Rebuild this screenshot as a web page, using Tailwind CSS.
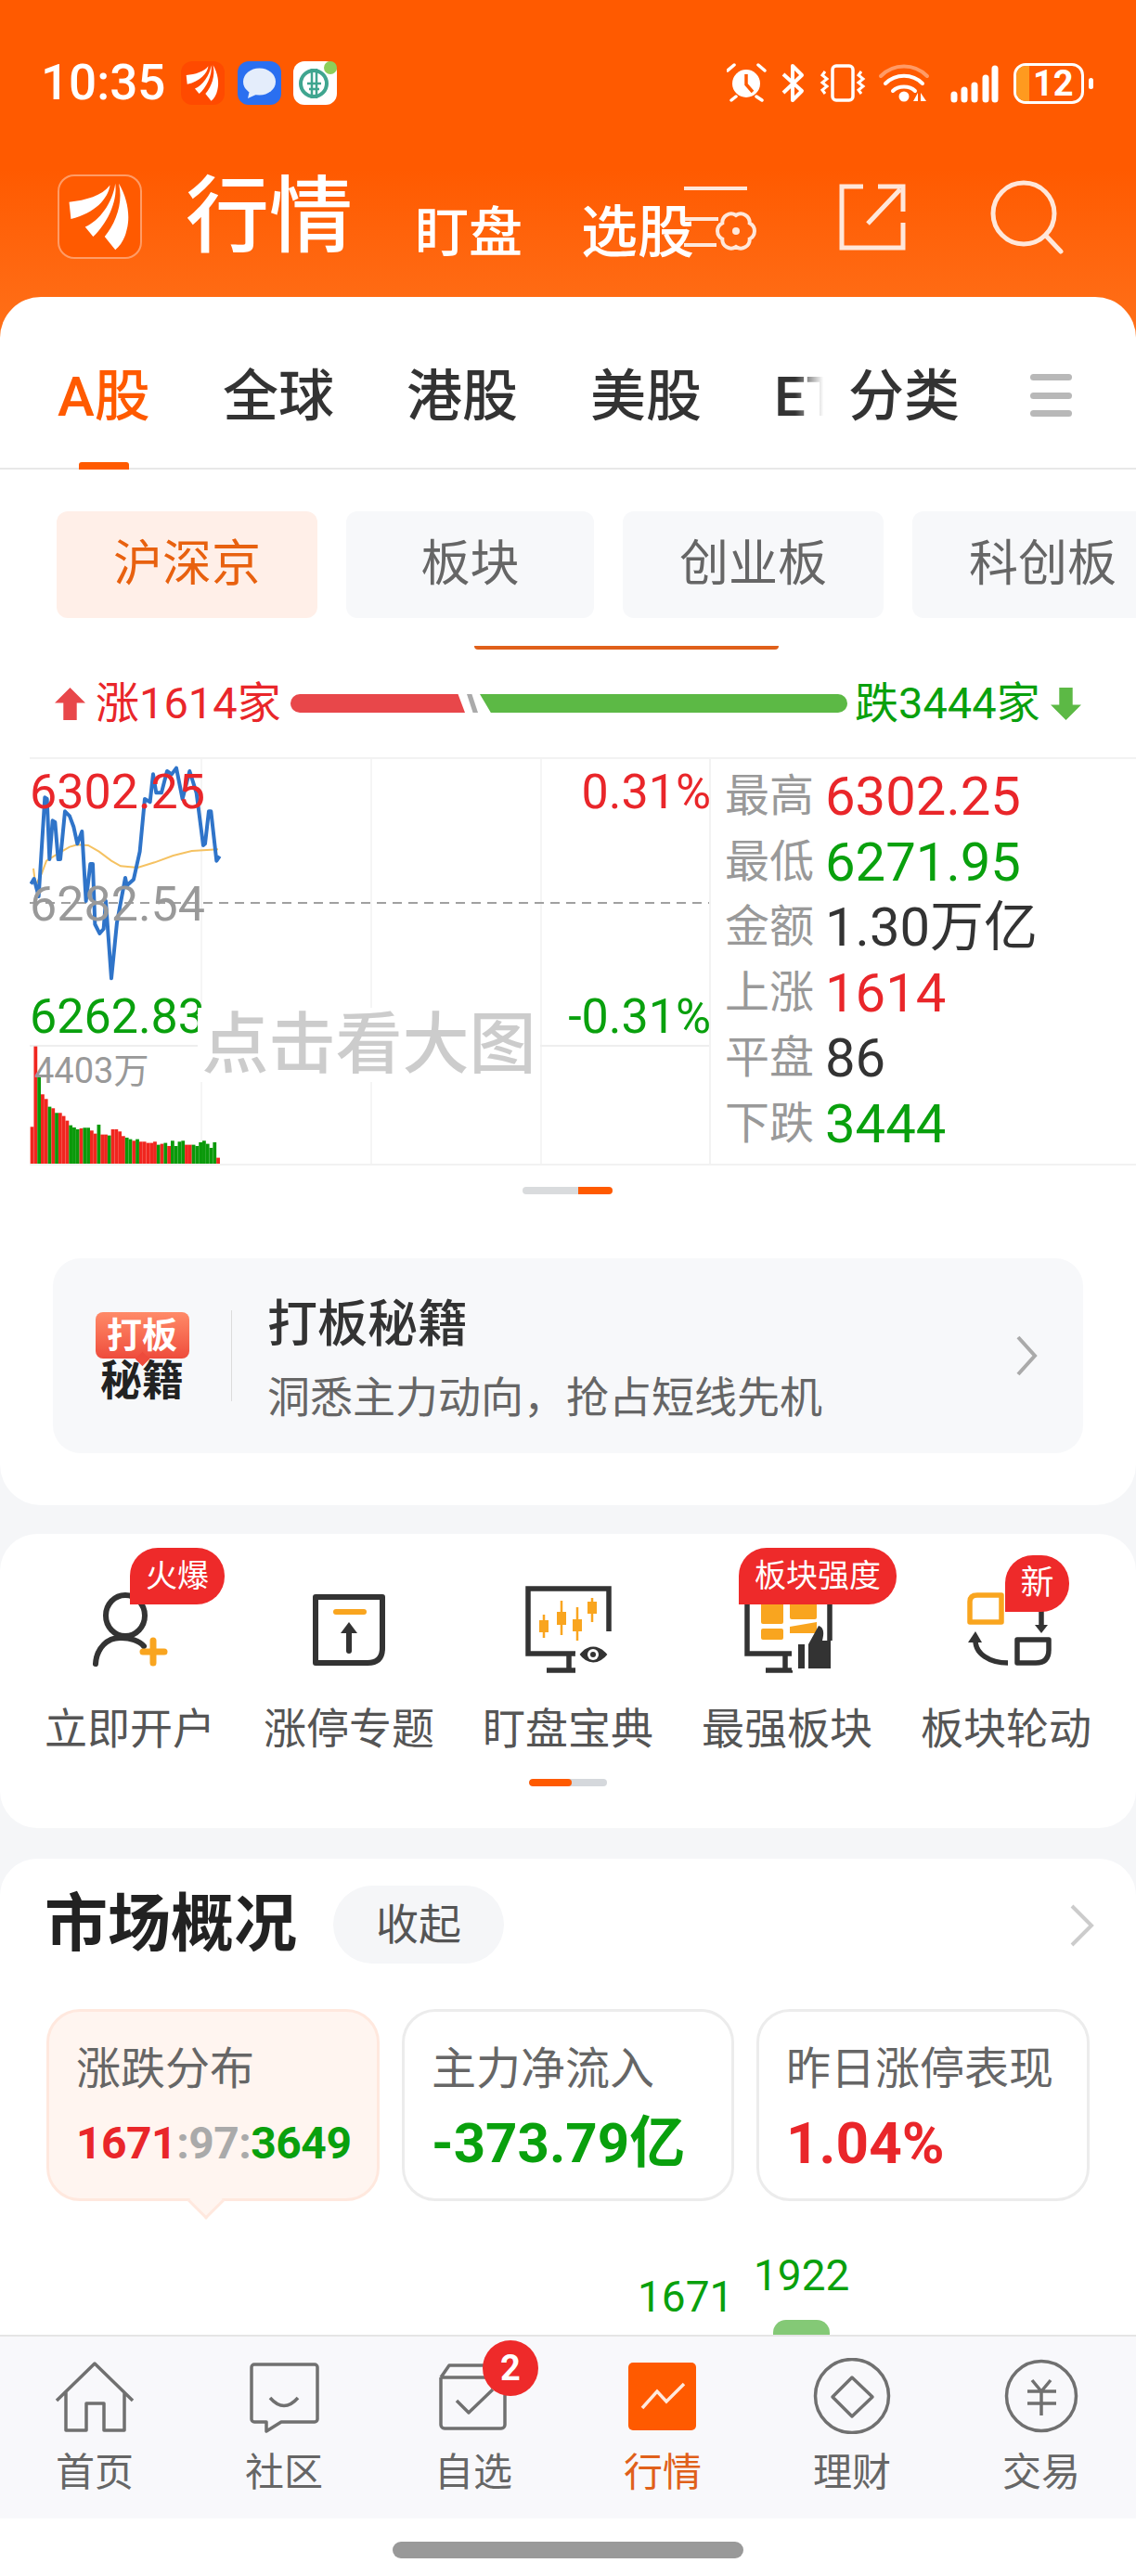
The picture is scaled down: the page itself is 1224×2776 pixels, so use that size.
<!DOCTYPE html>
<html lang="zh">
<head>
    <meta charset="utf-8"/>
    <meta content="width=device-width, initial-scale=1.0" name="viewport"/>
    <title>行情</title>
    <script src="https://cdn.jsdelivr.net/npm/@tailwindcss/browser@4"></script>
</head>
<body class="bg-[#f5f6f8] font-['Roboto','Noto_Sans_CJK_SC',sans-serif] antialiased">
<div class="w-[1224px] h-[2776px] overflow-hidden flex flex-col whitespace-nowrap">
    <!-- Orange header -->
    <header class="h-[364px] flex-none bg-gradient-to-b from-[#ff5a00] from-50% to-[#ff7018] text-white">
        <!-- Status bar -->
        <div class="h-[47px] mt-[66px] flex items-center pl-[44px] pr-[46px]">
            <span class="text-[53px] font-medium leading-none w-[151px]">10:35</span>
            <div class="w-[47px] h-[47px] rounded-[12px] bg-[#ff4a00] flex items-center justify-center">
                <svg viewBox="0 0 91 91" class="w-[47px] h-[47px]"><g fill="#fff"><path d="M11 29C30 27 48 22 57 10C55 25 40 42 13 48Z"/><path d="M63 8C66 30 52 55 38 68L29 57C45 50 60 30 63 8Z"/><path d="M67 8C77 25 80 45 76 60C74 70 69 78 63 83L51 68C64 52 72 30 67 8Z"/></g></svg>
            </div>
            <div class="w-[47px] h-[47px] ml-[14px] rounded-[12px] bg-[#2a6ff0] flex items-center justify-center">
                <svg viewBox="0 0 47 47" class="w-[47px] h-[47px]"><ellipse cx="23.5" cy="22" rx="17.5" ry="14.5" fill="#e4edfb"/><path d="M13 31L11 40L22 35Z" fill="#e4edfb"/></svg>
            </div>
            <div class="w-[47px] h-[47px] ml-[13px] rounded-[12px] bg-white relative">
                <svg viewBox="0 0 47 47" class="w-[47px] h-[47px]"><circle cx="22" cy="24" r="14" fill="none" stroke="#3fa58f" stroke-width="4"/><path d="M20 8V40M25 8V40M15 24H30M17 30H28" stroke="#3fa58f" stroke-width="2.5" fill="none"/><circle cx="40" cy="7" r="7" fill="#8ccf5a"/></svg>
            </div>
            <div class="flex-1"></div>
            <svg viewBox="0 0 293 46" class="w-[293px] h-[46px] mr-[16px]" fill="none" stroke="#fff">
                <circle cx="21" cy="23" r="15" fill="#fff" stroke="none"/>
                <path d="M21 13V24L28 32" stroke="#ff5a00" stroke-width="3.5"/>
                <path d="M1 9L8 3M34 3L41 9M5 41L10 37M32 37L38 41" stroke-width="3.5" stroke-linecap="round"/>
                <path d="M61 13L81 31L71 41V4L81 14L61 33" stroke-width="4" stroke-linejoin="round"/>
                <rect x="114" y="4" width="22" height="37" rx="4" stroke-width="3.5"/>
                <path d="M106 10l-3 4l5 4l-5 4l5 4l-5 4l3 4M145 10l-3 4l5 4l-5 4l5 4l-5 4l3 4" stroke-width="3"/>
                <path d="M166 15C180 1 202 1 216 15" stroke="#ff9b66" stroke-width="4" stroke-linecap="round"/>
                <path d="M171 23C182 12 200 12 211 23M179 31C185 25 197 25 203 31" stroke-width="4" stroke-linecap="round"/>
                <circle cx="191" cy="37" r="5.5" fill="#fff" stroke="none"/>
                <path d="M206 33V42L201 42ZM209 33V42L215 42Z" fill="#fff" stroke="none"/>
                <g stroke-width="7" stroke-linecap="round"><path d="M245 35V40M256 30V40M267 25V40M279 17V40M289 7V40"/></g>
            </svg>
            <div class="w-[76px] h-[44px] rounded-[13px] border-[3px] border-white overflow-hidden flex items-center">
                <div class="w-[14px] h-full bg-[#ff9a1f]"></div>
                <span class="ml-[4px] text-[38px] font-bold leading-[38px]">12</span>
            </div>
            <div class="w-[5px] h-[12px] ml-[5px] rounded-full bg-white"></div>
        </div>
        <!-- Title row -->
        <div class="mt-[75px] h-[91px] flex items-center pl-[62px]">
            <div class="w-[91px] h-[91px] rounded-[18px] border-2 border-white/40 bg-[#ff5a00] flex-none">
                <svg viewBox="0 0 91 91" class="w-[87px] h-[87px]"><g fill="#fff"><path d="M11 29C30 27 48 22 57 10C55 25 40 42 13 48Z"/><path d="M63 8C66 30 52 55 38 68L29 57C45 50 60 30 63 8Z"/><path d="M67 8C77 25 80 45 76 60C74 70 69 78 63 83L51 68C64 52 72 30 67 8Z"/></g></svg>
            </div>
            <span class="ml-[47px] text-[90px] leading-[91px] font-medium flex-none">行情</span>
            <span class="ml-[67px] mt-[34px] text-[58px] leading-[60px] font-medium flex-none">盯盘</span>
            <span class="ml-[63px] mt-[34px] w-[122px] text-[61px] leading-[60px] font-medium flex-none">选股</span>
            <svg viewBox="0 0 80 80" class="w-[80px] h-[80px] ml-[-12px] flex-none opacity-85" fill="none" stroke="#fff" stroke-width="4">
                <path d="M1 9H69M1 42H38M1 70H36"/>
                <path d="M57 38A9.5 9.5 0 0 1 71.7 46.500A9.5 9.5 0 0 1 71.7 63.500A9.5 9.5 0 0 1 57 72A9.500 9.500 0 0 1 42.300 63.500A9.500 9.500 0 0 1 42.300 46.500A9.500 9.500 0 0 1 57 38Z"/>
                <circle cx="57" cy="55" r="4" fill="#fff" stroke="none"/>
            </svg>
            <svg viewBox="0 0 72 72" class="w-[72px] h-[72px] ml-[88px] flex-none opacity-85" fill="none" stroke="#fff" stroke-width="5">
                <path d="M26 3H3V69H69V42M42 3H69V30M66 6L31 43"/>
            </svg>
            <svg viewBox="0 0 80 80" class="w-[80px] h-[80px] ml-[91px] flex-none opacity-85" fill="none" stroke="#fff" stroke-width="5">
                <circle cx="36" cy="36" r="33"/>
                <path d="M60 60L76 77" stroke-linecap="round"/>
            </svg>
        </div>
    </header>

    <!-- Market panel -->
    <section class="mt-[-44px] h-[1302px] flex-none bg-white rounded-[44px] overflow-hidden">
        <!-- Main tabs -->
        <div class="h-[186px] border-b-2 border-[#e8e8e8] relative pt-[74px] pl-[62px] flex text-[60px] leading-[68px] font-medium text-[#333]">
            <span class="text-[#ff5a00] w-[100px] flex-none">A股</span>
            <span class="ml-[78px] flex-none">全球</span>
            <span class="ml-[78px] flex-none">港股</span>
            <span class="ml-[78px] flex-none">美股</span>
            <span class="ml-[78px] w-[76px] overflow-hidden relative flex-none">ETF<span class="absolute inset-0 bg-gradient-to-r from-transparent from-30% to-white to-70%"></span></span>
            <span class="ml-[4px] flex-none">分类</span>
            <div class="ml-[76px] mt-[9px] w-[45px] h-[46px] flex flex-col justify-between flex-none">
                <div class="h-[7px] rounded-sm bg-[#b8b8b8]"></div>
                <div class="h-[7px] rounded-sm bg-[#b8b8b8]"></div>
                <div class="h-[7px] rounded-sm bg-[#b8b8b8]"></div>
            </div>
            <div class="absolute left-[85px] bottom-[-2px] w-[54px] h-[8px] rounded-t-[3px] bg-[#ff5a00]"></div>
        </div>
        <!-- Sub tabs -->
        <div class="mt-[45px] h-[115px] pl-[61px] flex gap-[31px] text-[53px] text-[#666] overflow-hidden">
            <div class="w-[281px] flex-none rounded-[12px] bg-[#ffefe8] text-[#e8610f] flex items-center justify-center">沪深京</div>
            <div class="w-[267px] flex-none rounded-[12px] bg-[#f7f8fa] flex items-center justify-center">板块</div>
            <div class="w-[281px] flex-none rounded-[12px] bg-[#f7f8fa] flex items-center justify-center">创业板</div>
            <div class="w-[281px] flex-none rounded-[12px] bg-[#f7f8fa] flex items-center justify-center">科创板</div>
        </div>
        <div class="mt-[30px] ml-[511px] w-[328px] h-[4px] bg-[#e0601a] rounded-b-sm"></div>
        <!-- Rise and fall bar -->
        <div class="mt-[37px] h-[42px] flex items-center pl-[59px] text-[47px] leading-[42px]">
            <svg viewBox="0 0 32 34" class="w-[33px] h-[35px] flex-none"><path d="M16 0L32 16H23V34H9V16H0Z" fill="#e8474a"/></svg>
            <span class="ml-[11px] w-[198px] text-[#e9262a] flex-none">涨1614家</span>
            <div class="ml-[12px] w-[188px] h-[20px] bg-[#e8474a] rounded-l-full [clip-path:polygon(0_0,96%_0,100%_100%,0_100%)] flex-none"></div>
            <div class="ml-[2px] w-[12px] h-[20px] bg-[#aaa] [clip-path:polygon(0_0,45%_0,100%_100%,55%_100%)] flex-none"></div>
            <div class="ml-[2px] w-[396px] h-[20px] bg-[#5cb945] rounded-r-full [clip-path:polygon(0_0,100%_0,100%_100%,3%_100%)] flex-none"></div>
            <span class="ml-[8px] w-[202px] text-[#09a00d] flex-none">跌3444家</span>
            <svg viewBox="0 0 32 34" class="ml-[9px] w-[33px] h-[35px] flex-none"><path d="M16 34L32 18H23V0H9V18H0Z" fill="#5cb945"/></svg>
        </div>
        <!-- Chart and stats -->
        <div class="mt-[37px] ml-[32px] h-[440px] flex border-y-2 border-[#f2f2f2]">
            <div class="relative w-[734px] flex-none border-r-2 border-[#f2f2f2]">
                <svg id="chart" viewBox="0 0 732 436" class="absolute inset-0 w-[732px] h-[436px]" fill="none">
                    <path d="M185 0V436M368 0V436M551 0V436" stroke="#f5f5f5" stroke-width="2"/>
                    <path d="M0 309H732" stroke="#eeeeee" stroke-width="2"/>
                    <path d="M0 155H732" stroke="#a0a0a0" stroke-width="2" stroke-dasharray="10 7"/>
                    <g id="lines" transform="translate(-12 -7) scale(.3333)">
                        <g id="vol"></g>
                        <polyline stroke="#f5c262" stroke-width="6" points="48,375 55,430 75,390 90,350 130,325 165,305 190,298 225,300 260,320 300,350 330,367 385,372 440,355 500,333 560,318 645,313"/>
                        <polyline stroke="#2f74c9" stroke-width="12" stroke-linejoin="round" points="40,425 50,408 65,465 85,145 92,150 100,345 110,220 118,225 128,345 135,345 150,190 165,205 178,240 190,295 205,255 218,480 232,360 240,360 247,555 262,585 275,570 282,480 300,730 318,550 345,405 350,430 372,410 392,320 408,150 425,160 435,70 445,130 462,130 480,60 495,70 510,50 530,150 553,60 575,130 597,300 603,295 615,190 622,190 640,350 650,335"/>
                    </g>
                </svg>
                <span class="absolute left-0 top-[6px] text-[52px] leading-[60px] text-[#e9262a]">6302.25</span>
                <span class="absolute right-[-2px] top-[6px] text-[52px] leading-[60px] text-[#e9262a]">0.31%</span>
                <span class="absolute left-0 top-[127px] text-[52px] leading-[60px] text-[#999]">6282.54</span>
                <span class="absolute left-0 top-[248px] text-[52px] leading-[60px] text-[#09a00d]">6262.83</span>
                <span class="absolute right-[-2px] top-[248px] text-[52px] leading-[60px] text-[#09a00d]">-0.31%</span>
                <span class="absolute left-[5px] top-[313px] text-[38px] leading-[46px] text-[#999]">4403万</span>
                <div class="absolute left-[181px] top-[268px] w-[369px] h-[80px] bg-white flex items-center justify-center text-[72px] font-medium text-[#cccccc]">点击看大图</div>
            </div>
            <div class="flex-1 pl-[15px] pt-[5px] text-[58px] leading-[70.6px]">
                <div class="flex items-center"><span class="w-[108px] text-[48px] text-[#999]">最高</span><span class="text-[#e9262a]">6302.25</span></div>
                <div class="flex items-center"><span class="w-[108px] text-[48px] text-[#999]">最低</span><span class="text-[#09a00d]">6271.95</span></div>
                <div class="flex items-center"><span class="w-[108px] text-[48px] text-[#999]">金额</span><span class="text-[#333]">1.30万亿</span></div>
                <div class="flex items-center"><span class="w-[108px] text-[48px] text-[#999]">上涨</span><span class="text-[#e9262a]">1614</span></div>
                <div class="flex items-center"><span class="w-[108px] text-[48px] text-[#999]">平盘</span><span class="text-[#333]">86</span></div>
                <div class="flex items-center"><span class="w-[108px] text-[48px] text-[#999]">下跌</span><span class="text-[#09a00d]">3444</span></div>
            </div>
        </div>
        <div class="mt-[23px] ml-[563px] w-[97px] h-[8px] flex rounded-sm overflow-hidden">
            <div class="w-[60px] bg-[#d9dbdd]"></div>
            <div class="flex-1 bg-[#ff5a00]"></div>
        </div>
        <!-- Banner -->
        <div class="mt-[69px] mx-[57px] h-[210px] rounded-[30px] bg-[#f7f8fa] flex items-center relative">
            <div class="ml-[44px] w-[104px] flex-none flex flex-col items-center">
                <div class="w-[101px] h-[50px] rounded-[8px] bg-gradient-to-b from-[#ff8a68] to-[#ee4b3c] text-white text-[38px] font-bold leading-[50px] text-center relative">打板<div class="absolute left-[45px] bottom-[-6px] w-[11px] h-[11px] rotate-45 bg-[#ee4b3c]"></div></div>
                <div class="mt-[5px] text-[45px] leading-[40px] font-bold text-[#222]">秘籍</div>
            </div>
            <div class="ml-[44px] w-[1px] h-[98px] bg-[#dcdcdc] flex-none"></div>
            <div class="ml-[38px] mt-[10px]">
                <div class="text-[54px] leading-[60px] font-medium text-[#333]">打板秘籍</div>
                <div class="mt-[20px] text-[46px] leading-[56px] text-[#666]">洞悉主力动向&#65292;抢占短线先机</div>
            </div>
            <svg viewBox="0 0 26 44" class="absolute right-[48px] top-[83px] w-[26px] h-[44px]" fill="none"><path d="M4 2L22 22L4 42" stroke="#aaaaaa" stroke-width="4"/></svg>
        </div>
    </section>

    <!-- Shortcuts -->
    <section class="mt-[31px] h-[317px] flex-none bg-white rounded-[40px] pt-[55px]">
        <div class="grid grid-cols-5 px-[22px] text-[46px] leading-[46px] text-[#555] text-center">
            <div class="relative flex flex-col items-center">
                <svg viewBox="0 0 100 100" class="w-[100px] h-[100px]" fill="none" stroke="#333" stroke-width="6" stroke-linecap="round">
                    <ellipse cx="45" cy="33" rx="21" ry="22"/>
                    <path d="M13 85C14 68 26 56 41 57C50 57 60 60 65 66"/>
                    <path d="M75 60V84M64 72H87" stroke="#f9a51f" stroke-width="7"/>
                </svg>
                <div class="absolute left-[118px] top-[-40px] w-[102px] h-[61px] bg-[#ee2a2a] rounded-[30px] rounded-bl-none text-white text-[34px] leading-[61px]">火爆</div>
                <span class="mt-[32px]">立即开户</span>
            </div>
            <div class="flex flex-col items-center">
                <svg viewBox="0 0 100 100" class="w-[100px] h-[100px]" fill="none" stroke="#333" stroke-width="6">
                    <path d="M14 13H86V68Q86 84 70 84H14Z" stroke-linejoin="round"/>
                    <path d="M36 29H66" stroke="#f9a51f" stroke-linecap="round"/>
                    <path d="M50 48V71" stroke-linecap="round"/>
                    <path d="M41 52L50 40L59 52Z" fill="#333" stroke="none"/>
                </svg>
                <span class="mt-[32px]">涨停专题</span>
            </div>
            <div class="flex flex-col items-center">
                <svg viewBox="0 0 100 100" class="w-[100px] h-[100px]" fill="none" stroke="#333" stroke-width="5.5">
                    <path d="M94 50V4H7V74H58M51 74V92M27 92H58"/>
                    <g stroke="#f9a51f" stroke-width="2.5"><path d="M24 32V57M43 17V54M60 24V60M76 14V40"/></g>
                    <g fill="#f9a51f" stroke="none"><rect x="19" y="38" width="10" height="13"/><rect x="38" y="29" width="10" height="14"/><rect x="55" y="37" width="10" height="13"/><rect x="71" y="18" width="10" height="13"/></g>
                    <path d="M60 75C70 61 84 61 95 75C84 89 70 89 60 75Z" fill="#333" stroke="#fff" stroke-width="4"/>
                    <circle cx="77" cy="75" r="6" fill="#fff" stroke="none"/>
                    <circle cx="77" cy="75" r="3" fill="#333" stroke="none"/>
                </svg>
                <span class="mt-[32px]">盯盘宝典</span>
            </div>
            <div class="relative flex flex-col items-center">
                <svg viewBox="0 0 100 100" class="w-[100px] h-[100px]" fill="none" stroke="#333" stroke-width="5.5">
                    <path d="M96 15V60M7 15V74H56M48 74V92M27 92H56"/>
                    <g fill="#f9a51f" stroke="none"><rect x="22" y="15" width="24" height="27" rx="2"/><rect x="53" y="15" width="29" height="22" rx="2"/><path d="M53 45L82 40V52H53Z"/><rect x="22" y="47" width="24" height="12" rx="2"/></g>
                    <path d="M55 62H100V92H55Z" fill="#fff" stroke="none"/>
                    <path d="M62 64H69V90H62ZM73 90V64L84 44C90 46 90 52 88 60H97V90Z" fill="#333" stroke="none"/>
                </svg>
                <div class="absolute left-[66px] top-[-40px] w-[170px] h-[61px] bg-[#ee2a2a] rounded-[30px] rounded-bl-none text-white text-[34px] leading-[61px]">板块强度</div>
                <span class="mt-[32px]">最强板块</span>
            </div>
            <div class="relative flex flex-col items-center">
                <svg viewBox="0 0 100 100" class="w-[100px] h-[100px]" fill="none" stroke="#333" stroke-width="5.5">
                    <path d="M11 40V18Q11 11 19 11H45V40Z" stroke="#f9a51f" stroke-linejoin="round"/>
                    <path d="M62 59H96V70Q96 84 82 84H62Z" stroke-linejoin="round"/>
                    <path d="M88 28V44"/>
                    <path d="M81 43L88 52L95 43Z" fill="#333" stroke="none"/>
                    <path d="M52 84C32 84 17 74 17 60"/>
                    <path d="M9 62L17 50L24 62Z" fill="#333" stroke="none"/>
                </svg>
                <div class="absolute left-[117px] top-[-32px] w-[69px] h-[61px] bg-[#ee2a2a] rounded-[30px] rounded-bl-none text-white text-[36px] leading-[61px]">新</div>
                <span class="mt-[32px]">板块轮动</span>
            </div>
        </div>
        <div class="mt-[31px] mx-auto w-[84px] h-[8px] rounded-full bg-[#d5d8dc] overflow-hidden">
            <div class="w-[46px] h-full rounded-full bg-[#ff5a00]"></div>
        </div>
    </section>

    <!-- Market overview -->
    <section class="mt-[33px] flex-1 bg-white rounded-t-[40px] px-[50px] flex flex-col overflow-hidden">
        <div class="mt-[29px] h-[84px] flex items-center relative flex-none">
            <span class="ml-[-2px] text-[68px] font-bold text-[#222] leading-[84px]">市场概况</span>
            <span class="ml-[39px] w-[184px] h-[84px] rounded-full bg-[#f5f6f8] text-[46px] text-[#555] flex items-center justify-center">收起</span>
            <svg viewBox="0 0 28 46" class="absolute right-[-6px] top-[20px] w-[28px] h-[46px]" fill="none"><path d="M3 2L24 23L3 44" stroke="#cccccc" stroke-width="4"/></svg>
        </div>
        <div class="mt-[49px] flex gap-[24px] flex-none">
            <div class="relative w-[359px] h-[207px] flex-none rounded-[36px] border-[3px] border-[#ffe8de] bg-[#fff5f0] pl-[29px] pt-[34px]">
                <div class="text-[48px] leading-[56px] text-[#666]">涨跌分布</div>
                <div class="mt-[22px] text-[48px] leading-[60px] font-bold tracking-[-.5px]"><span class="text-[#e9262a]">1671</span><span class="text-[#aaa]">:97:</span><span class="text-[#09a00d]">3649</span></div>
                <div class="absolute left-[155px] bottom-[-17px] w-[28px] h-[28px] rotate-45 bg-[#fff5f0] border-r-[3px] border-b-[3px] border-[#ffe8de]"></div>
            </div>
            <div class="w-[358px] h-[207px] flex-none rounded-[36px] border-[3px] border-[#ececec] pl-[29px] pt-[34px]">
                <div class="text-[48px] leading-[56px] text-[#666]">主力净流入</div>
                <div class="mt-[18px] text-[60px] leading-[68px] font-bold text-[#09a00d]">-373.79亿</div>
            </div>
            <div class="w-[359px] h-[207px] flex-none rounded-[36px] border-[3px] border-[#ececec] pl-[29px] pt-[34px]">
                <div class="text-[48px] leading-[56px] text-[#666]">昨日涨停表现</div>
                <div class="mt-[18px] text-[62px] leading-[68px] font-bold text-[#e9262a]">1.04%</div>
            </div>
        </div>
        <!-- Distribution chart, cut off by the tab bar -->
        <div class="relative flex-1">
            <span class="absolute left-[637px] top-[76px] text-[46px] leading-[54px] text-[#09a00d]">1671</span>
            <span class="absolute left-[762px] top-[53px] text-[46px] leading-[54px] text-[#09a00d]">1922</span>
            <div class="absolute left-[783px] top-[128px] w-[61px] h-[40px] rounded-t-[14px] bg-[#84c976]"></div>
        </div>
    </section>

    <!-- Tab bar -->
    <nav class="h-[198px] flex-none bg-[#f8f8fb] border-t-2 border-[#e5e5e5] grid grid-cols-6 pt-[23px] text-[42px] leading-[44px] text-[#666] text-center">
        <div class="flex flex-col items-center">
            <svg viewBox="0 0 90 82" class="w-[90px] h-[82px]" fill="none" stroke="#707070" stroke-width="3.5" stroke-linejoin="round"><path d="M4 46L45 6L86 46M14 37V78H36V49H55V78H77V37"/></svg>
            <span class="mt-[20px]">首页</span>
        </div>
        <div class="flex flex-col items-center">
            <svg viewBox="0 0 90 82" class="w-[90px] h-[82px]" fill="none" stroke="#707070" stroke-width="3.5" stroke-linejoin="round"><path d="M13 7H78A3 3 0 0 1 81 10V66A3 3 0 0 1 78 69H42L26 79V69H13A3 3 0 0 1 10 66V10A3 3 0 0 1 13 7Z"/><path d="M30 43Q45 60 60 43"/></svg>
            <span class="mt-[20px]">社区</span>
        </div>
        <div class="relative flex flex-col items-center">
            <svg viewBox="0 0 90 82" class="w-[90px] h-[82px]" fill="none" stroke="#707070" stroke-width="3.5" stroke-linejoin="round"><path d="M10 21L19 8H62M10 21H70M10 21V72A4 4 0 0 0 14 76H75A4 4 0 0 0 79 72V40"/><path d="M27 46L40 59L66 34"/></svg>
            <div class="absolute left-[112px] top-[-19px] w-[60px] h-[60px] rounded-full bg-[#ee2a2a] text-white text-[38px] font-bold leading-[60px]">2</div>
            <span class="mt-[20px]">自选</span>
        </div>
        <div class="flex flex-col items-center text-[#e0601a]">
            <svg viewBox="0 0 90 82" class="w-[90px] h-[82px]" fill="none"><rect x="8" y="5" width="73" height="73" rx="5" fill="#ff5a00"/><path d="M23 54L39 36L49 47L68 28" stroke="#ffe9dc" stroke-width="3.5"/></svg>
            <span class="mt-[20px]">行情</span>
        </div>
        <div class="flex flex-col items-center">
            <svg viewBox="0 0 90 82" class="w-[90px] h-[82px]" fill="none" stroke="#707070" stroke-width="3.5" stroke-linejoin="round"><circle cx="45" cy="41" r="39.5"/><path d="M45 21L67 42L45 63L24 42Z"/></svg>
            <span class="mt-[20px]">理财</span>
        </div>
        <div class="flex flex-col items-center">
            <svg viewBox="0 0 90 82" class="w-[90px] h-[82px]" fill="none" stroke="#707070" stroke-width="3.5" stroke-linejoin="round"><circle cx="45" cy="41" r="37.5"/><path d="M35 24L45 36L55 24M30 36H61M30 49H61M45 36V62"/></svg>
            <span class="mt-[20px]">交易</span>
        </div>
    </nav>
    <!-- Home indicator -->
    <div class="h-[62px] flex-none bg-white pt-[25px]">
        <div class="mx-auto w-[378px] h-[18px] rounded-full bg-[#999999]"></div>
    </div>
</div>
<script>
    // volume bars, traced from the picture: [top y, colour]
    const r = '#f0261f', g = '#0a990a';
    const bars = [[1210,r],[950,r],[1050,g],[1105,r],[1120,r],[1145,g],[1150,r],[1165,g],[1165,r],[1175,r],[1190,r],[1205,g],[1212,g],[1218,g],[1215,r],[1213,g],[1213,g],[1222,r],[1232,r],[1203,g],[1235,r],[1235,r],[1238,g],[1218,r],[1218,r],[1225,r],[1240,r],[1245,g],[1250,g],[1255,r],[1250,g],[1258,r],[1258,r],[1262,r],[1262,r],[1258,r],[1268,g],[1265,r],[1262,g],[1272,r],[1255,g],[1272,g],[1258,g],[1255,g],[1268,r],[1268,r],[1268,g],[1272,g],[1260,g],[1255,g],[1265,g],[1278,g],[1260,g],[1310,r]];
    const vol = document.getElementById('vol');
    bars.forEach(function (b, i) {
        const rect = document.createElementNS('http://www.w3.org/2000/svg', 'rect');
        rect.setAttribute('x', 38 + i * 11.35);
        rect.setAttribute('y', b[0]);
        rect.setAttribute('width', 11.35);
        rect.setAttribute('height', 1330 - b[0]);
        rect.setAttribute('fill', b[1]);
        vol.appendChild(rect);
    });
</script>
</body>
</html>
